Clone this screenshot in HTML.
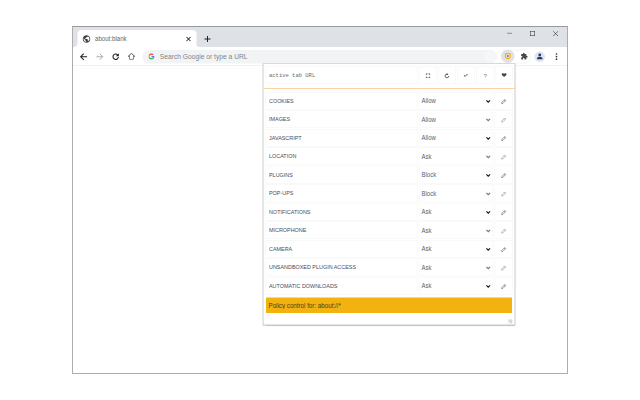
<!DOCTYPE html>
<html lang="en">
<head>
<meta charset="utf-8">
<title>about:blank</title>
<style>
*{box-sizing:border-box;margin:0;padding:0}
html,body{width:640px;height:400px;overflow:hidden;background:#fff}
body{font-family:"Liberation Sans",Arial,sans-serif}
#stage{position:absolute;left:0;top:0;width:1280px;height:800px;transform:scale(.5);transform-origin:0 0;background:#fff}
#win{position:absolute;left:144px;top:52px;width:992px;height:696px;border:2px solid #acacac;border-top-color:#98999c;background:#fff}
#strip{position:absolute;left:0;top:0;width:988px;height:40px;background:#dee1e6;z-index:2}
#tab{position:absolute;left:9px;top:6px;width:238px;height:34px;background:#fff;border-radius:8px 8px 0 0}
#tab:before,#tab:after{content:"";position:absolute;bottom:0;width:8px;height:8px;background:radial-gradient(circle at 0 0,#dee1e6 8px,#fff 8.5px)}
#tab:before{left:-8px}
#tab:after{right:-8px;background:radial-gradient(circle at 100% 0,#dee1e6 8px,#fff 8.5px)}
#tab:before{background:radial-gradient(circle at 0 0,#dee1e6 7.5px,#fff 8.5px)}
#tabtitle{position:absolute;left:34.500px;top:10px;font-size:13px;color:#63676c;letter-spacing:0;white-space:nowrap;transform:scaleX(.94);transform-origin:0 0}
.abs{position:absolute}
#toolbar{position:absolute;left:0;top:39px;width:988px;height:38px;background:#fff;border-bottom:1px solid #e4e4e4}
#omni{position:absolute;left:139px;top:6.500px;width:708px;height:27px;border-radius:14px;background:#f1f3f4}
#omnitext{position:absolute;left:34.500px;top:5.500px;font-size:13.400px;color:#80858a;white-space:nowrap}
#popup{position:absolute;left:526px;top:127px;width:504px;height:523px;background:#fff;border:1px solid #c9c9c9;box-shadow:0 0 0 1px #d2d2d2,0 2px 1.500px 0 rgba(0,0,0,.22),1px 1px 3px rgba(0,0,0,.1);font-size:11px;color:#444}
.cell{position:absolute;border:1px solid #f3f3f3;background:#fff}
.lbl{position:absolute;left:6px;font-size:11.600px;color:#4a4a55;white-space:nowrap;transform:scaleX(.935);transform-origin:0 0}
.val{position:absolute;left:2.500px;font-size:13.300px;color:#5e5e6c;white-space:nowrap;transform:scaleX(.9);transform-origin:0 0}
#url{position:absolute;left:6px;top:11px;font-family:"Liberation Mono",monospace;font-size:11px;color:#6a6a6a;white-space:nowrap}
#foot{position:absolute;left:5px;top:467px;width:491.500px;height:31px;background:#f2b311}
#foot span{position:absolute;left:5px;top:8px;font-size:13px;color:#463c1c;white-space:nowrap;transform:scaleX(.955);transform-origin:0 0}
svg{position:absolute;overflow:visible}
</style>
</head>
<body>
<div id="stage">
<div id="win">
  <div id="strip">
    <div id="tab">
      <svg style="left:9px;top:8.500px" width="18" height="18" viewBox="0 0 24 24"><path fill="#3c4043" d="M12 2C6.480 2 2 6.480 2 12s4.480 10 10 10 10-4.480 10-10S17.520 2 12 2zm-1 17.930c-3.950-.49-7-3.850-7-7.930 0-.62.080-1.210.21-1.790L9 15v1c0 1.100.9 2 2 2v1.930zm6.900-2.540c-.26-.81-1-1.390-1.900-1.390h-1v-3c0-.55-.45-1-1-1H8v-2h2c.55 0 1-.45 1-1V7h2c1.100 0 2-.9 2-2v-.41c2.930 1.190 5 4.060 5 7.410 0 2.080-.8 3.970-2.100 5.390z"/></svg>
      <div id="tabtitle">about:blank</div>
      <svg style="left:217px;top:13px" width="10" height="10" viewBox="0 0 10 10"><path d="M1 1l8 8M9 1l-8 8" stroke="#2c2f33" stroke-width="2.100" fill="none"/></svg>
    </div>
    <svg style="left:263px;top:18px" width="12" height="12" viewBox="0 0 12 12"><rect x="5" y="0" width="2" height="12" fill="#1f2124"/><rect x="0" y="5" width="12" height="2" fill="#1f2124"/></svg>
    <!-- window controls -->
    <svg style="left:868px;top:12px" width="10" height="1" viewBox="0 0 10 1"><path d="M0 .5h10" stroke="#3c3f42" stroke-width="1"/></svg>
    <svg style="left:914px;top:8px" width="10" height="10" viewBox="0 0 10 10"><rect x=".5" y=".5" width="9" height="9" fill="none" stroke="#26292c" stroke-width="1"/></svg>
    <svg style="left:959.5px;top:7.500px" width="10.500" height="10.500" viewBox="0 0 11 11"><path d="M.5.5l10 10M10.500.5l-10 10" stroke="#3c3f42" stroke-width="1.400" fill="none"/></svg>
  </div>
  <div id="toolbar">
    <!-- back -->
    <svg style="left:14px;top:12.500px" width="15" height="15" viewBox="0 0 16 16"><path d="M15 8H2M8 1.500L1.500 8 8 14.500" stroke="#1c1e21" stroke-width="2.200" fill="none"/></svg>
    <!-- forward -->
    <svg style="left:46px;top:12.500px" width="15" height="15" viewBox="0 0 16 16"><path d="M1 8h13M8 1.500L14.500 8 8 14.500" stroke="#a4a7ab" stroke-width="2" fill="none"/></svg>
    <!-- reload -->
    <svg style="left:77.500px;top:12.500px" width="15" height="15" viewBox="0 0 16 16"><path d="M13.700 8.600A5.800 5.800 0 1 1 11.900 3.700" stroke="#1c1e21" stroke-width="2.300" fill="none"/><path d="M14.500 0.600v6.300h-6.300z" fill="#1c1e21"/></svg>
    <!-- home -->
    <svg style="left:109px;top:12px" width="16" height="15" viewBox="0 0 18 17"><path d="M4.500 8.500V15.500h9V8.500" stroke="#6e7175" stroke-width="1.900" fill="none"/><path d="M4.500 8.500H1.800L9 2l7.200 6.500h-2.700" stroke="#2e3134" stroke-width="1.900" fill="none" stroke-linejoin="miter"/></svg>
    <div id="omni">
      <svg style="left:12px;top:7.500px" width="12" height="12" viewBox="0 0 48 48"><path fill="#EA4335" d="M24 9.500c3.540 0 6.710 1.220 9.210 3.600l6.850-6.850C35.900 2.380 30.470 0 24 0 14.620 0 6.510 5.380 2.560 13.220l7.980 6.190C12.430 13.720 17.740 9.500 24 9.500z"/><path fill="#4285F4" d="M46.980 24.550c0-1.570-.15-3.090-.38-4.550H24v9.020h12.940c-.58 2.960-2.260 5.480-4.780 7.180l7.730 6c4.510-4.180 7.090-10.360 7.090-17.650z"/><path fill="#FBBC05" d="M10.530 28.590c-.48-1.450-.76-2.990-.76-4.590s.27-3.140.76-4.590l-7.980-6.190C.92 16.460 0 20.120 0 24c0 3.880.92 7.540 2.560 10.780l7.970-6.190z"/><path fill="#34A853" d="M24 48c6.480 0 11.930-2.130 15.890-5.810l-7.730-6c-2.150 1.450-4.920 2.300-8.160 2.300-6.260 0-11.570-4.220-13.470-9.910l-7.980 6.190C6.510 42.620 14.620 48 24 48z"/></svg>
      <div id="omnitext">Search Google or type a URL</div>
      <div class="abs" style="right:2px;top:2px;width:23px;height:23px;border-radius:12px;background:#f6f7f8"></div>
    </div>
    <!-- extension pill -->
    <div class="abs" style="left:846px;top:6.500px;width:69px;height:27px;border-radius:14px;background:#fff;border:1px solid #ebebeb"></div>
    <div class="abs" style="left:856px;top:6px;width:27px;height:27px;border-radius:14px;background:#e1e2e4"></div>
    <svg style="left:862.900px;top:13px" width="13.200" height="13.200" viewBox="0 0 14 14"><path d="M1.900 1.700h10.200v5.500c0 2.700-2 4.100-5.100 5.100-3.100-1-5.100-2.400-5.100-5.100z" fill="#e4e5e7" stroke="#f4a900" stroke-width="2.200" stroke-linejoin="round"/><rect x="5.300" y="4.600" width="3.400" height="3.600" fill="#6f7683"/></svg>
    <!-- puzzle -->
    <svg style="left:895.200px;top:12.200px" width="15" height="15" viewBox="0 0 24 24"><path fill="#45484d" d="M20.500 11H19V7c0-1.100-.9-2-2-2h-4V3.500C13 2.120 11.880 1 10.500 1S8 2.120 8 3.500V5H4c-1.100 0-1.990.9-1.990 2v3.800H3.500c1.490 0 2.700 1.210 2.700 2.700s-1.210 2.700-2.700 2.700H2V20c0 1.100.9 2 2 2h3.800v-1.500c0-1.490 1.210-2.700 2.700-2.700 1.490 0 2.700 1.210 2.700 2.700V22H17c1.100 0 2-.9 2-2v-4h1.500c1.380 0 2.500-1.120 2.500-2.500S21.880 11 20.500 11z"/></svg>
    <!-- avatar -->
    <div class="abs" style="left:923px;top:10px;width:21px;height:21px;border-radius:11px;background:#e3e5ea"></div>
    <svg style="left:927px;top:13px" width="13" height="13" viewBox="0 0 14 14"><circle cx="7" cy="4.200" r="2.900" fill="#1b3a70"/><path d="M1 12.500c0-3 4-4.200 6-4.200s6 1.200 6 4.200v.8H1z" fill="#1b3a70"/></svg>
    <!-- dots -->
    <svg style="left:964.800px;top:13.400px" width="4" height="14.400" viewBox="0 0 4 14.400"><circle cx="2" cy="2" r="1.700" fill="#34373a"/><circle cx="2" cy="7.200" r="1.700" fill="#34373a"/><circle cx="2" cy="12.400" r="1.700" fill="#34373a"/></svg>
  </div>
</div>

<div id="popup">
  <!-- header -->
  <div class="cell" style="left:4px;top:4px;width:305px;height:35px"><div id="url">active tab URL</div></div>
  <!--HDR-->
  <div class="cell" style="left:311.6px;top:4px;width:35px;height:35px"><svg style="left:12.100px;top:13.600px" width="8" height="9" viewBox="0 0 9 10"><path d="M0 .9h3.400M5.600 .9H9M0 9.100h3.400M5.600 9.100H9" stroke="#555" stroke-width="1.800" fill="none"/><path d="M.7 0v3.600M8.300 0v3.600M.7 6.400V10M8.300 6.400V10" stroke="#666" stroke-width="1.400" fill="none"/></svg></div>
  <div class="cell" style="left:349.5px;top:4px;width:35px;height:35px"><svg style="left:11.500px;top:12.500px" width="9.500" height="10.500" viewBox="0 0 10 11"><path d="M8.700 6.300A3.700 3.700 0 1 1 5.600 2.700" stroke="#444" stroke-width="1.700" fill="none"/><path d="M4.600 0l3.400 2.700-3.400 2.500z" fill="#444"/></svg></div>
  <div class="cell" style="left:387.3px;top:4px;width:35px;height:35px"><svg style="left:12px;top:14.300px" width="9" height="7" viewBox="0 0 9 7"><path d="M.8 3.400l2.500 2.400L8.200 .9" stroke="#333" stroke-width="1.700" fill="none"/></svg></div>
  <div class="cell" style="left:425.2px;top:4px;width:35px;height:35px"><div class="abs" style="left:14px;top:11.250px;font-size:12.500px;color:#7c7c7c;line-height:15px">?</div></div>
  <div class="cell" style="left:463.0px;top:4px;width:35px;height:35px"><svg style="left:11.700px;top:13px" width="10.500" height="8" viewBox="0 0 16 13" preserveAspectRatio="none"><path d="M8 12.600C3 8.600 .5 6.600 .5 4 .5 2 2.200.5 4.200.5 5.700.5 7.200 1.400 8 2.700 8.800 1.400 10.300.5 11.800.5c2 0 3.700 1.500 3.700 3.500 0 2.600-2.500 4.600-7.500 8.600z" fill="#444"/></svg></div>
  <!--/HDR-->
  <div class="abs" style="left:0;top:48px;width:502px;height:2px;background:#f9d4a2"></div>
  <!--ROWS-->
  <div class="cell" style="left:4px;top:56px;width:305px;height:35px"><div class="lbl" style="top:8.5px">COOKIES</div></div>
  <div class="cell" style="left:312px;top:56px;width:146px;height:35px"><div class="val" style="top:9px">Allow</div><svg style="left:131.500px;top:14.500px" width="9" height="6" viewBox="0 0 9 6"><path d="M.8 .8l3.700 3.700L8.200 .8" stroke="#151517" stroke-width="2.300" fill="none"/></svg></div>
  <div class="cell" style="left:462px;top:56px;width:35.5px;height:35px"><svg style="left:11.800px;top:11.600px" width="11.500" height="11.500" viewBox="0 0 14 14"><path d="M1.500 12.500l.8-3.300 6.700-6.700 2.500 2.500-6.700 6.700zM7.800 3.700l2.500 2.500" stroke="#5c5e62" stroke-width="1.500" fill="none" stroke-linejoin="round"/></svg></div>
  <div class="cell" style="left:4px;top:93px;width:305px;height:35px"><div class="lbl" style="top:8.5px">IMAGES</div></div>
  <div class="cell" style="left:312px;top:93px;width:146px;height:35px"><div class="val" style="top:9px">Allow</div><svg style="left:131.500px;top:14.500px" width="9" height="6" viewBox="0 0 9 6"><path d="M.8 .8l3.700 3.700L8.200 .8" stroke="#74777b" stroke-width="2.300" fill="none"/></svg></div>
  <div class="cell" style="left:462px;top:93px;width:35.5px;height:35px"><svg style="left:11.800px;top:11.600px" width="11.500" height="11.500" viewBox="0 0 14 14"><path d="M1.500 12.500l.8-3.300 6.700-6.700 2.500 2.500-6.700 6.700zM7.800 3.700l2.500 2.500" stroke="#909296" stroke-width="1.500" fill="none" stroke-linejoin="round"/></svg></div>
  <div class="cell" style="left:4px;top:130px;width:305px;height:35px"><div class="lbl" style="top:8.5px">JAVASCRIPT</div></div>
  <div class="cell" style="left:312px;top:130px;width:146px;height:35px"><div class="val" style="top:9px">Allow</div><svg style="left:131.500px;top:14.500px" width="9" height="6" viewBox="0 0 9 6"><path d="M.8 .8l3.700 3.700L8.200 .8" stroke="#151517" stroke-width="2.300" fill="none"/></svg></div>
  <div class="cell" style="left:462px;top:130px;width:35.5px;height:35px"><svg style="left:11.800px;top:11.600px" width="11.500" height="11.500" viewBox="0 0 14 14"><path d="M1.500 12.500l.8-3.300 6.700-6.700 2.500 2.500-6.700 6.700zM7.800 3.700l2.500 2.500" stroke="#5c5e62" stroke-width="1.500" fill="none" stroke-linejoin="round"/></svg></div>
  <div class="cell" style="left:4px;top:167px;width:305px;height:35px"><div class="lbl" style="top:8.5px">LOCATION</div></div>
  <div class="cell" style="left:312px;top:167px;width:146px;height:35px"><div class="val" style="top:9px">Ask</div><svg style="left:131.500px;top:14.500px" width="9" height="6" viewBox="0 0 9 6"><path d="M.8 .8l3.700 3.700L8.200 .8" stroke="#74777b" stroke-width="2.300" fill="none"/></svg></div>
  <div class="cell" style="left:462px;top:167px;width:35.5px;height:35px"><svg style="left:11.800px;top:11.600px" width="11.500" height="11.500" viewBox="0 0 14 14"><path d="M1.500 12.500l.8-3.300 6.700-6.700 2.500 2.500-6.700 6.700zM7.800 3.700l2.500 2.500" stroke="#909296" stroke-width="1.500" fill="none" stroke-linejoin="round"/></svg></div>
  <div class="cell" style="left:4px;top:204px;width:305px;height:35px"><div class="lbl" style="top:8.5px">PLUGINS</div></div>
  <div class="cell" style="left:312px;top:204px;width:146px;height:35px"><div class="val" style="top:9px">Block</div><svg style="left:131.500px;top:14.500px" width="9" height="6" viewBox="0 0 9 6"><path d="M.8 .8l3.700 3.700L8.200 .8" stroke="#151517" stroke-width="2.300" fill="none"/></svg></div>
  <div class="cell" style="left:462px;top:204px;width:35.5px;height:35px"><svg style="left:11.800px;top:11.600px" width="11.500" height="11.500" viewBox="0 0 14 14"><path d="M1.500 12.500l.8-3.300 6.700-6.700 2.500 2.500-6.700 6.700zM7.800 3.700l2.500 2.500" stroke="#5c5e62" stroke-width="1.500" fill="none" stroke-linejoin="round"/></svg></div>
  <div class="cell" style="left:4px;top:241px;width:305px;height:35px"><div class="lbl" style="top:8.5px">POP-UPS</div></div>
  <div class="cell" style="left:312px;top:241px;width:146px;height:35px"><div class="val" style="top:9px">Block</div><svg style="left:131.500px;top:14.500px" width="9" height="6" viewBox="0 0 9 6"><path d="M.8 .8l3.700 3.700L8.200 .8" stroke="#74777b" stroke-width="2.300" fill="none"/></svg></div>
  <div class="cell" style="left:462px;top:241px;width:35.5px;height:35px"><svg style="left:11.800px;top:11.600px" width="11.500" height="11.500" viewBox="0 0 14 14"><path d="M1.500 12.500l.8-3.300 6.700-6.700 2.500 2.500-6.700 6.700zM7.800 3.700l2.500 2.500" stroke="#909296" stroke-width="1.500" fill="none" stroke-linejoin="round"/></svg></div>
  <div class="cell" style="left:4px;top:278px;width:305px;height:35px"><div class="lbl" style="top:8.5px">NOTIFICATIONS</div></div>
  <div class="cell" style="left:312px;top:278px;width:146px;height:35px"><div class="val" style="top:9px">Ask</div><svg style="left:131.500px;top:14.500px" width="9" height="6" viewBox="0 0 9 6"><path d="M.8 .8l3.700 3.700L8.200 .8" stroke="#151517" stroke-width="2.300" fill="none"/></svg></div>
  <div class="cell" style="left:462px;top:278px;width:35.5px;height:35px"><svg style="left:11.800px;top:11.600px" width="11.500" height="11.500" viewBox="0 0 14 14"><path d="M1.500 12.500l.8-3.300 6.700-6.700 2.500 2.500-6.700 6.700zM7.800 3.700l2.500 2.500" stroke="#5c5e62" stroke-width="1.500" fill="none" stroke-linejoin="round"/></svg></div>
  <div class="cell" style="left:4px;top:315px;width:305px;height:35px"><div class="lbl" style="top:8.5px">MICROPHONE</div></div>
  <div class="cell" style="left:312px;top:315px;width:146px;height:35px"><div class="val" style="top:9px">Ask</div><svg style="left:131.500px;top:14.500px" width="9" height="6" viewBox="0 0 9 6"><path d="M.8 .8l3.700 3.700L8.200 .8" stroke="#74777b" stroke-width="2.300" fill="none"/></svg></div>
  <div class="cell" style="left:462px;top:315px;width:35.5px;height:35px"><svg style="left:11.800px;top:11.600px" width="11.500" height="11.500" viewBox="0 0 14 14"><path d="M1.500 12.500l.8-3.300 6.700-6.700 2.500 2.500-6.700 6.700zM7.800 3.700l2.500 2.500" stroke="#909296" stroke-width="1.500" fill="none" stroke-linejoin="round"/></svg></div>
  <div class="cell" style="left:4px;top:352px;width:305px;height:35px"><div class="lbl" style="top:8.5px">CAMERA</div></div>
  <div class="cell" style="left:312px;top:352px;width:146px;height:35px"><div class="val" style="top:9px">Ask</div><svg style="left:131.500px;top:14.500px" width="9" height="6" viewBox="0 0 9 6"><path d="M.8 .8l3.700 3.700L8.200 .8" stroke="#151517" stroke-width="2.300" fill="none"/></svg></div>
  <div class="cell" style="left:462px;top:352px;width:35.5px;height:35px"><svg style="left:11.800px;top:11.600px" width="11.500" height="11.500" viewBox="0 0 14 14"><path d="M1.500 12.500l.8-3.300 6.700-6.700 2.500 2.500-6.700 6.700zM7.800 3.700l2.500 2.500" stroke="#5c5e62" stroke-width="1.500" fill="none" stroke-linejoin="round"/></svg></div>
  <div class="cell" style="left:4px;top:389px;width:305px;height:35px"><div class="lbl" style="top:8.5px">UNSANDBOXED PLUGIN ACCESS</div></div>
  <div class="cell" style="left:312px;top:389px;width:146px;height:35px"><div class="val" style="top:9px">Ask</div><svg style="left:131.500px;top:14.500px" width="9" height="6" viewBox="0 0 9 6"><path d="M.8 .8l3.700 3.700L8.200 .8" stroke="#74777b" stroke-width="2.300" fill="none"/></svg></div>
  <div class="cell" style="left:462px;top:389px;width:35.5px;height:35px"><svg style="left:11.800px;top:11.600px" width="11.500" height="11.500" viewBox="0 0 14 14"><path d="M1.500 12.500l.8-3.300 6.700-6.700 2.500 2.500-6.700 6.700zM7.800 3.700l2.500 2.500" stroke="#909296" stroke-width="1.500" fill="none" stroke-linejoin="round"/></svg></div>
  <div class="cell" style="left:4px;top:426px;width:305px;height:35px"><div class="lbl" style="top:8.5px">AUTOMATIC DOWNLOADS</div></div>
  <div class="cell" style="left:312px;top:426px;width:146px;height:35px"><div class="val" style="top:9px">Ask</div><svg style="left:131.500px;top:14.500px" width="9" height="6" viewBox="0 0 9 6"><path d="M.8 .8l3.700 3.700L8.200 .8" stroke="#151517" stroke-width="2.300" fill="none"/></svg></div>
  <div class="cell" style="left:462px;top:426px;width:35.5px;height:35px"><svg style="left:11.800px;top:11.600px" width="11.500" height="11.500" viewBox="0 0 14 14"><path d="M1.500 12.500l.8-3.300 6.700-6.700 2.500 2.500-6.700 6.700zM7.800 3.700l2.500 2.500" stroke="#5c5e62" stroke-width="1.500" fill="none" stroke-linejoin="round"/></svg></div>
  <!--/ROWS-->
  <div id="foot"><span>Policy control for: about://*</span></div>
  <svg style="left:489.500px;top:510.500px" width="7.500" height="7.500" viewBox="0 0 8 8"><rect x="0" y="0" width="8" height="8" fill="#cfcfcf"/><path d="M1.500 6.500L6.500 1.500M1.500 3.500v3h3" stroke="#fff" stroke-width="1.200" fill="none"/></svg>
</div>
</div>
</body>
</html>
